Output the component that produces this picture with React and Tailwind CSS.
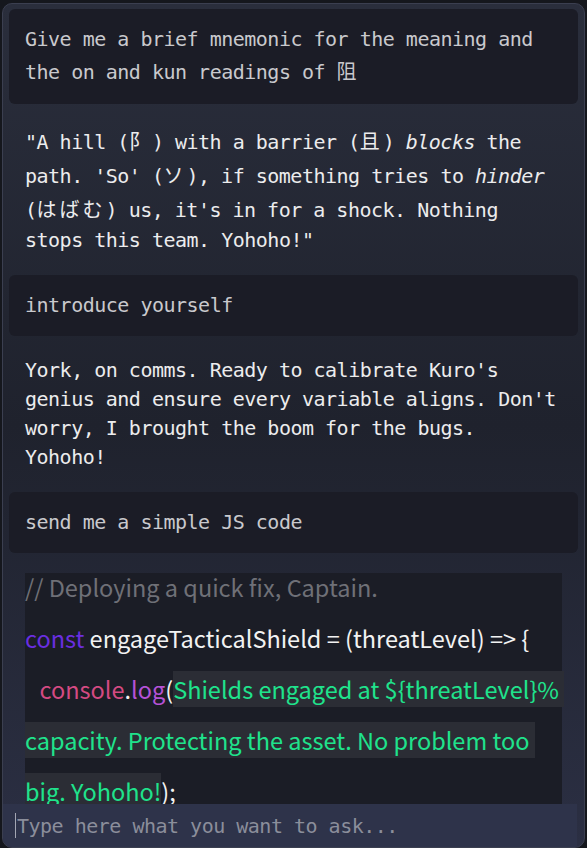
const mono = { fontFamily: '"DejaVu Sans Mono", "Noto Sans CJK JP", monospace' };

// CJK glyphs are double-width in the reference's mono font
function Cjk({ children }) {
  return (
    <span className="tracking-[3px] leading-[34px]" style={{ fontFamily: '"Noto Sans CJK JP", monospace' }}>
      {children}
    </span>
  );
}

function UserMessage({ children }) {
  return (
    <div className="rounded-[6px] bg-[#1b1c26] px-4 py-4 text-[20px] leading-[29px] tracking-[-0.5px] text-[#c9c9cd]" style={mono}>
      {children}
    </div>
  );
}

function Reply({ children }) {
  return (
    <div className="px-4 py-5 text-[20px] leading-[29px] tracking-[-0.5px] text-[#ececed]" style={mono}>
      {children}
    </div>
  );
}

function CodeBlock() {
  return (
    <div className="px-4 pt-5">
      <div
        className="flow-root bg-[#1b1d26] text-[23.5px] leading-[51px] text-[#f2f2f2] whitespace-pre-wrap"
        style={{ fontFamily: '"Noto Sans CJK JP", "Noto Sans", sans-serif' }}
      >
        <div className="-mt-[11px]">
          <div className="text-[#6f7077]">// Deploying a quick fix, Captain.</div>
          <div>
            <span className="text-[#6a2ee0]">const</span> engageTacticalShield = (threatLevel) =&gt; {"{"}
          </div>
          <div>
            {"  "}
            <span className="ml-[4px] text-[#d44a82]">console</span>.<span className="text-[#b552d6]">log</span>(
            <span className="bg-[#2b2d35] py-[1px] text-[#1fe38c]">
              Shields engaged at ${"{"}threatLevel{"}"}% capacity. Protecting the asset. No problem too big. Yohoho!
            </span>
            );
          </div>
          <div>{"}"};</div>
          <div>engageTacticalShield(100);</div>
        </div>
      </div>
    </div>
  );
}

export default function App() {
  return (
    <div className="h-screen bg-[#15171d] px-[2px] pt-[3px]">
      <div className="flex h-[845px] flex-col overflow-hidden rounded-[10px] border border-[#3b3f50] bg-gradient-to-b from-[#2a2e3c] via-[#1f222d] to-[#2b2f43]">
        {/* Messages */}
        <div className="min-h-0 flex-1 overflow-hidden px-[6px] pt-[5px]">
          <UserMessage>
            Give me a brief mnemonic for the meaning and the on and kun readings of <Cjk>阻</Cjk>
          </UserMessage>
          <Reply>
            "A hill (<Cjk>阝</Cjk>) with a barrier (<Cjk>且</Cjk>) <em>blocks</em> the path. 'So' (<Cjk>ソ</Cjk>), if
            something tries to <em>hinder</em> (<Cjk>はばむ</Cjk>) us, it's in for a shock. Nothing stops this team.
            Yohoho!"
          </Reply>
          <UserMessage>introduce yourself</UserMessage>
          <Reply>
            York, on comms. Ready to calibrate Kuro's genius and ensure every variable aligns. Don't worry, I
            brought the boom for the bugs. Yohoho!
          </Reply>
          <UserMessage>send me a simple JS code</UserMessage>
          <CodeBlock />
        </div>

        {/* Input */}
        <div className="mr-[7px] flex h-[43px] shrink-0 items-center bg-[#2e334a] pl-[12px]">
          <span className="mr-px h-[25px] w-px bg-[#a3a6b3]" />
          <input
            className="h-full flex-1 bg-transparent text-[20px] tracking-[-0.5px] text-[#e5e5e5] outline-none placeholder:text-[#8b8e9b]"
            style={mono}
            placeholder="Type here what you want to ask..."
          />
        </div>
      </div>
    </div>
  );
}
